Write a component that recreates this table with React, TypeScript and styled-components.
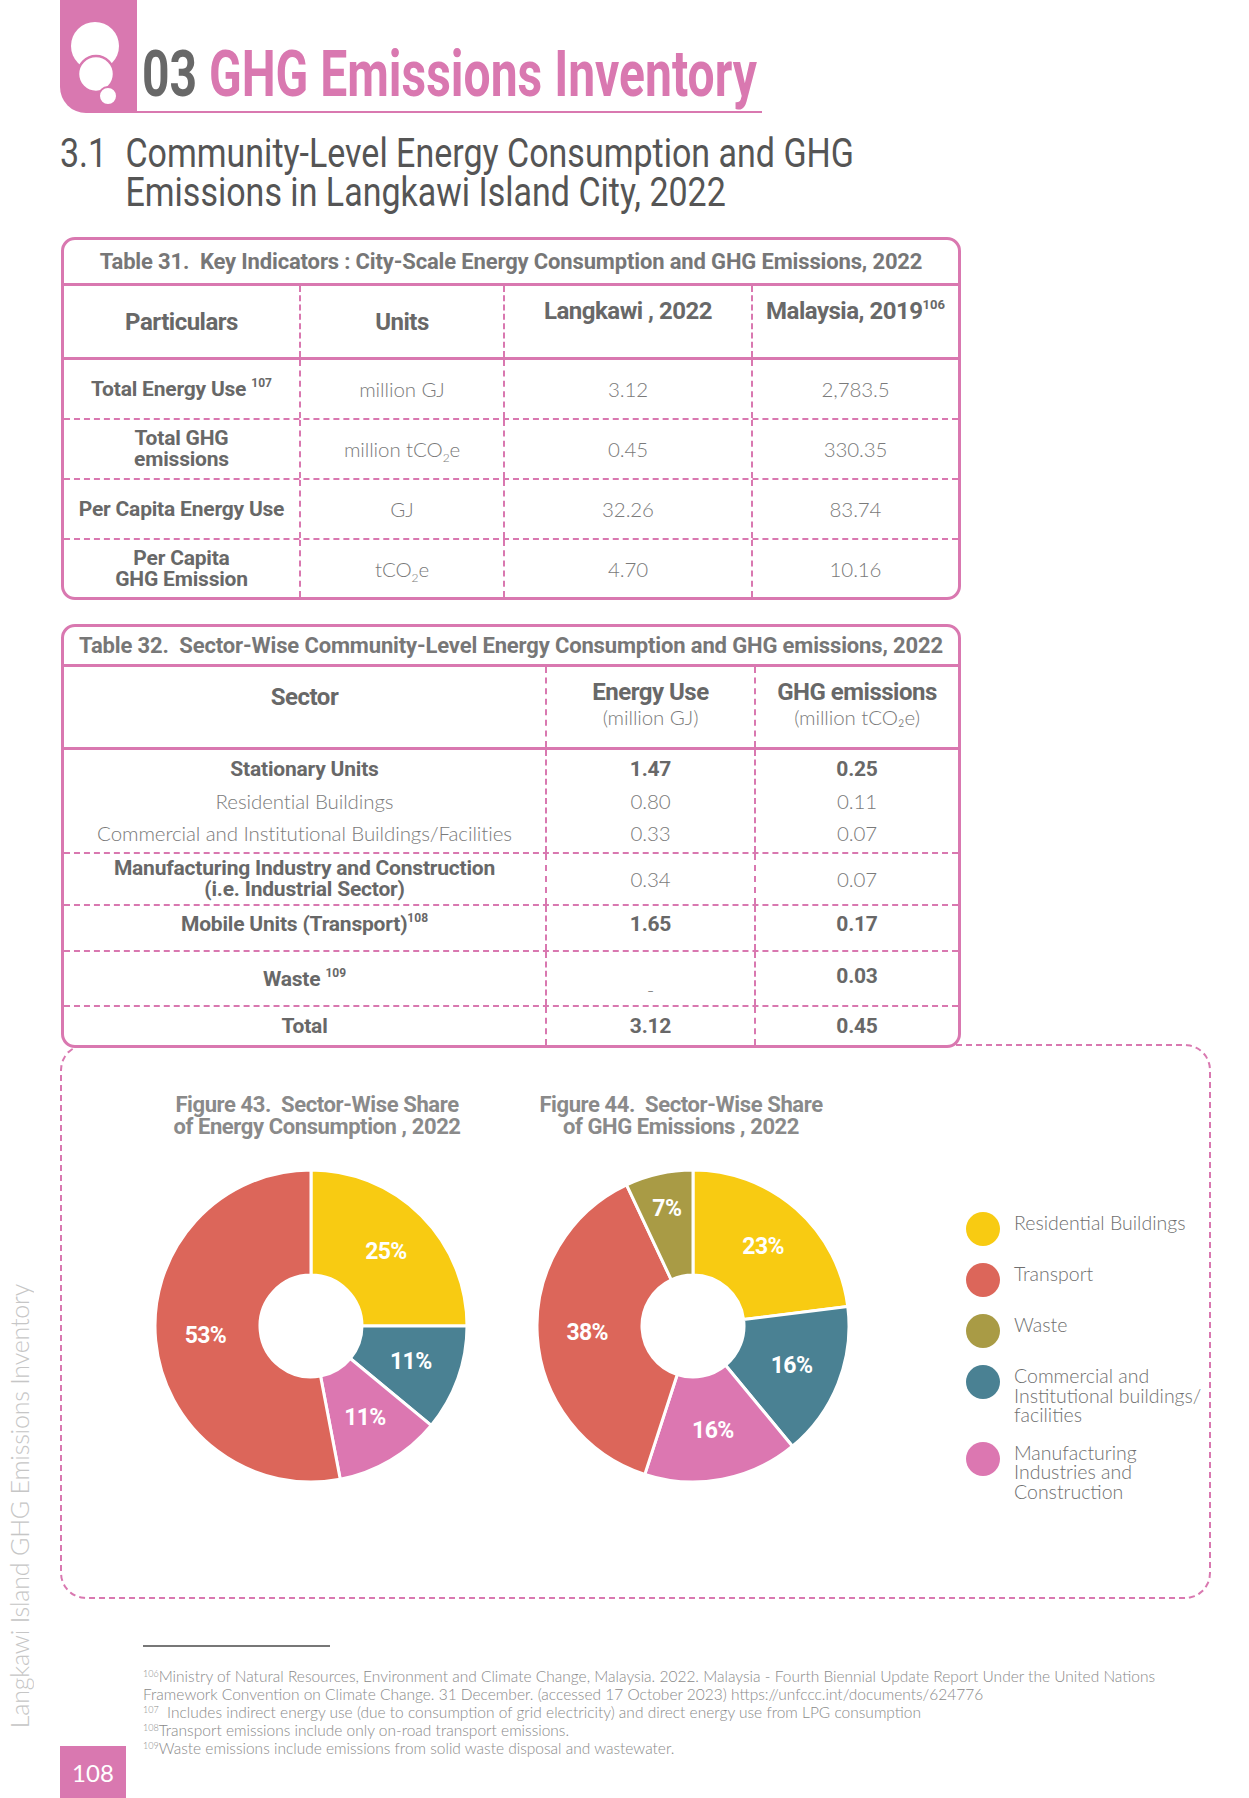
import styled, { createGlobalStyle } from "styled-components";

const PINK = "#d978b0";
const GRAY = "#686868";
const LIGHT = "#7a7a7a";

const BOLD = `Roboto, "Liberation Sans", sans-serif`;
const THIN = `Lato, "Liberation Sans", sans-serif`;

const GlobalStyle = createGlobalStyle`
  html, body {
    margin: 0;
    padding: 0;
    background: #ffffff;
  }
  body {
    font-family: ${THIN};
  }
`;

const Page = styled.div`
  width: 1249px;
  height: 1798px;
  display: flex;
  overflow: hidden;
  background: #fff;
`;

const Gutter = styled.div`
  width: 60px;
  flex: none;
  display: flex;
  flex-direction: column;
  justify-content: flex-end;
  padding-bottom: 70px;
  box-sizing: border-box;
`;

const SideLabel = styled.div`
  writing-mode: vertical-rl;
  transform: rotate(180deg);
  font-family: ${THIN};
  font-weight: 300;
  font-size: 25px;
  line-height: 30px;
  letter-spacing: -0.2px;
  color: #c6c6c6;
  margin-left: 4px;
  white-space: nowrap;
`;

const Main = styled.div`
  flex: 1;
  display: flex;
  flex-direction: column;
`;

/* ---------- chapter header ---------- */

const Header = styled.div`
  display: flex;
  height: 113px;
`;

const Tab = styled.div`
  width: 77px;
  height: 113px;
  background: ${PINK};
  border-radius: 0 0 0 26px;
  flex: none;
`;

const ChapterLine = styled.div`
  width: 625px;
  border-bottom: 2px solid ${PINK};
  display: flex;
  align-items: flex-end;
  padding: 0 0 10px 5px;
  box-sizing: border-box;
`;

const ChapterTitle = styled.h1`
  margin: 0;
  font-family: ${BOLD};
  font-weight: 700;
  font-size: 64px;
  line-height: 52px;
  color: ${GRAY};
  white-space: nowrap;
  transform: scaleX(0.75);
  transform-origin: left bottom;
  span {
    color: ${PINK};
  }
`;

const SectionTitle = styled.h2`
  margin: 21px 0 0 0;
  display: flex;
  font-family: ${BOLD};
  font-weight: 400;
  font-size: 40px;
  line-height: 39px;
  color: #555;
  white-space: nowrap;
  transform: scaleX(0.85);
  transform-origin: left top;
`;

const SectionNum = styled.span`
  width: 77px;
  flex: none;
`;

/* ---------- tables ---------- */

const Card = styled.div<{ $mt: number }>`
  position: relative;
  z-index: 1;
  width: 900px;
  margin-top: ${(p) => p.$mt}px;
  margin-left: 1px;
  border: 3px solid ${PINK};
  border-radius: 14px;
  background: #fff;
  box-sizing: border-box;
  overflow: hidden;
`;

const CardTitle = styled.div<{ $h: number }>`
  height: ${(p) => p.$h}px;
  display: flex;
  align-items: center;
  justify-content: center;
  border-bottom: 3px solid ${PINK};
  font-family: ${BOLD};
  font-weight: 700;
  font-size: 22px;
  letter-spacing: -0.15px;
  color: #777;
  white-space: nowrap;
`;

const Row = styled.div<{ $cols: string; $h: number; $line?: "solid" | "dashed" | "none" }>`
  display: grid;
  grid-template-columns: ${(p) => p.$cols};
  height: ${(p) => p.$h}px;
  box-sizing: content-box;
  border-bottom: ${(p) =>
    p.$line === "solid"
      ? `3px solid ${PINK}`
      : p.$line === "none"
      ? "none"
      : `2px dashed ${PINK}`};
`;

const Cell = styled.div<{ $v?: "center" | "start"; $pt?: number }>`
  display: flex;
  flex-direction: column;
  align-items: center;
  justify-content: ${(p) => (p.$v === "start" ? "flex-start" : "center")};
  padding-top: ${(p) => p.$pt ?? 0}px;
  text-align: center;
  box-sizing: border-box;
  & + & {
    border-left: 2px dashed ${PINK};
  }
`;

const HeadText = styled.div`
  font-family: ${BOLD};
  font-weight: 700;
  font-size: 24px;
  line-height: 26px;
  letter-spacing: -0.5px;
  color: ${GRAY};
  white-space: nowrap;
  sup {
    font-size: 13px;
    vertical-align: 10px;
    line-height: 0;
    letter-spacing: 0;
  }
`;

const BoldText = styled.div<{ $lh?: number }>`
  font-family: ${BOLD};
  font-weight: 700;
  font-size: 21px;
  line-height: ${(p) => p.$lh ?? 32}px;
  letter-spacing: -0.2px;
  color: ${GRAY};
  white-space: nowrap;
  sup {
    font-size: 12px;
    vertical-align: 9px;
    line-height: 0;
    letter-spacing: 0;
  }
`;

const LightText = styled.div<{ $lh?: number }>`
  font-family: ${THIN};
  font-weight: 300;
  font-size: 20.5px;
  line-height: ${(p) => p.$lh ?? 32}px;
  letter-spacing: -0.1px;
  color: ${LIGHT};
  white-space: nowrap;
  sub {
    font-size: 12px;
    vertical-align: -5px;
    line-height: 0;
  }
`;

/* ---------- charts ---------- */

const ChartBox = styled.div`
  margin-top: -4px;
  width: 1151px;
  height: 555px;
  border: 2px dashed ${PINK};
  border-radius: 26px;
  box-sizing: border-box;
  display: flex;
  padding: 48px 0 0 78px;
`;

const Figure = styled.div`
  width: 342px;
  display: flex;
  flex-direction: column;
  align-items: center;
  & + & {
    margin-left: 40px;
  }
`;

const FigTitle = styled.div<{ $dx: number }>`
  font-family: ${BOLD};
  font-weight: 700;
  font-size: 22px;
  line-height: 22px;
  letter-spacing: -0.4px;
  color: #8a8a8a;
  text-align: center;
  white-space: nowrap;
  margin: 0 0 28px ${(p) => p.$dx}px;
`;

const Legend = styled.div`
  margin: 118px 0 0 102px;
  display: flex;
  flex-direction: column;
  gap: 17px;
`;

const LegendItem = styled.div`
  display: flex;
  align-items: flex-start;
  gap: 14px;
`;

const Dot = styled.span<{ $c: string }>`
  width: 34px;
  height: 34px;
  border-radius: 50%;
  background: ${(p) => p.$c};
  flex: none;
`;

const LegendLabel = styled.div`
  font-family: ${THIN};
  font-weight: 300;
  font-size: 19.5px;
  line-height: 19.5px;
  color: #6f6f6f;
  padding-top: 1px;
`;

/* ---------- footer ---------- */

const Footer = styled.div`
  flex: 1;
  display: grid;
  grid-template-columns: 83px 1fr;
`;

const PageNum = styled.div`
  align-self: end;
  width: 66px;
  height: 52px;
  background: ${PINK};
  color: #fff;
  font-family: ${THIN};
  font-weight: 400;
  font-size: 24px;
  display: flex;
  align-items: center;
  justify-content: center;
`;

const Notes = styled.div`
  padding-top: 46px;
`;

const Rule = styled.div`
  width: 187px;
  height: 2px;
  background: #777;
  margin-bottom: 20px;
`;

const Note = styled.div`
  font-family: ${THIN};
  font-weight: 300;
  font-size: 15.5px;
  line-height: 18px;
  letter-spacing: 0;
  color: #8a8a8a;
  white-space: nowrap;
  sup {
    font-size: 9px;
    vertical-align: 5px;
    line-height: 0;
  }
`;

/* ---------- donut ---------- */

type Slice = { value: number; color: string; lr?: number };

const YELLOW = "#f8cb12";
const RED = "#dc665a";
const OLIVE = "#a99b45";
const TEAL = "#4a8193";
const MAGENTA = "#dc77b1";

function pt(c: number, r: number, deg: number) {
  const a = (deg * Math.PI) / 180;
  return [c + r * Math.sin(a), c - r * Math.cos(a)];
}

function Donut({ slices }: { slices: Slice[] }) {
  const c = 160;
  const r1 = 156;
  const r0 = 51;
  let acc = 0;
  return (
    <svg width={320} height={320} viewBox="0 0 320 320">
      {slices.map((s, i) => {
        const a0 = (acc / 100) * 360;
        acc += s.value;
        const a1 = (acc / 100) * 360;
        const large = a1 - a0 > 180 ? 1 : 0;
        const [x1, y1] = pt(c, r1, a0);
        const [x2, y2] = pt(c, r1, a1);
        const [x3, y3] = pt(c, r0, a1);
        const [x4, y4] = pt(c, r0, a0);
        const d = `M${x1} ${y1} A${r1} ${r1} 0 ${large} 1 ${x2} ${y2} L${x3} ${y3} A${r0} ${r0} 0 ${large} 0 ${x4} ${y4} Z`;
        const [lx, ly] = pt(c, s.lr ?? 106, (a0 + a1) / 2);
        return (
          <g key={i}>
            <path d={d} fill={s.color} stroke="#fff" strokeWidth={3} strokeLinejoin="round" />
            <text
              x={lx}
              y={ly}
              fill="#fff"
              fontFamily="Roboto, sans-serif"
              fontWeight={700}
              fontSize={23}
              letterSpacing={-0.6}
              textAnchor="middle"
              dominantBaseline="central"
            >
              {s.value}%
            </text>
          </g>
        );
      })}
    </svg>
  );
}

function Logo() {
  return (
    <svg width={77} height={113} viewBox="0 0 77 113">
      <circle cx={35} cy={46} r={24} fill="#fff" />
      <circle cx={36} cy={74} r={18} fill="#fff" stroke={PINK} strokeWidth={2.5} />
      <circle cx={48} cy={96} r={9} fill="#fff" stroke={PINK} strokeWidth={2} />
    </svg>
  );
}

const T31 = "235px 204px 248px 1fr";
const T32 = "481px 209px 1fr";

export default function App() {
  return (
    <Page>
      <GlobalStyle />
      <Gutter>
        <SideLabel>Langkawi Island GHG Emissions Inventory</SideLabel>
      </Gutter>
      <Main>
        <Header>
          <Tab>
            <Logo />
          </Tab>
          <ChapterLine>
            <ChapterTitle>
              03 <span>GHG Emissions Inventory</span>
            </ChapterTitle>
          </ChapterLine>
        </Header>

        <SectionTitle>
          <SectionNum>3.1</SectionNum>
          <div>
            Community-Level Energy Consumption and GHG
            <br />
            Emissions in Langkawi Island City, 2022
          </div>
        </SectionTitle>

        <Card $mt={25}>
          <CardTitle $h={43}>
            Table 31.&nbsp; Key Indicators : City-Scale Energy Consumption and GHG Emissions, 2022
          </CardTitle>
          <Row $cols={T31} $h={71} $line="solid">
            <Cell>
              <HeadText>Particulars</HeadText>
            </Cell>
            <Cell>
              <HeadText>Units</HeadText>
            </Cell>
            <Cell $v="start" $pt={12}>
              <HeadText>Langkawi , 2022</HeadText>
            </Cell>
            <Cell $v="start" $pt={12}>
              <HeadText>
                Malaysia, 2019<sup>106</sup>
              </HeadText>
            </Cell>
          </Row>
          <Row $cols={T31} $h={58}>
            <Cell>
              <BoldText>
                Total Energy Use <sup>107</sup>
              </BoldText>
            </Cell>
            <Cell>
              <LightText>million GJ</LightText>
            </Cell>
            <Cell>
              <LightText>3.12</LightText>
            </Cell>
            <Cell>
              <LightText>2,783.5</LightText>
            </Cell>
          </Row>
          <Row $cols={T31} $h={58}>
            <Cell>
              <BoldText $lh={21}>Total GHG</BoldText>
              <BoldText $lh={21}>emissions</BoldText>
            </Cell>
            <Cell>
              <LightText>
                million tCO<sub>2</sub>e
              </LightText>
            </Cell>
            <Cell>
              <LightText>0.45</LightText>
            </Cell>
            <Cell>
              <LightText>330.35</LightText>
            </Cell>
          </Row>
          <Row $cols={T31} $h={58}>
            <Cell>
              <BoldText>Per Capita Energy Use</BoldText>
            </Cell>
            <Cell>
              <LightText>GJ</LightText>
            </Cell>
            <Cell>
              <LightText>32.26</LightText>
            </Cell>
            <Cell>
              <LightText>83.74</LightText>
            </Cell>
          </Row>
          <Row $cols={T31} $h={57} $line="none">
            <Cell>
              <BoldText $lh={21}>Per Capita</BoldText>
              <BoldText $lh={21}>GHG Emission</BoldText>
            </Cell>
            <Cell>
              <LightText>
                tCO<sub>2</sub>e
              </LightText>
            </Cell>
            <Cell>
              <LightText>4.70</LightText>
            </Cell>
            <Cell>
              <LightText>10.16</LightText>
            </Cell>
          </Row>
        </Card>

        <Card $mt={24}>
          <CardTitle $h={37}>
            Table 32.&nbsp; Sector-Wise Community-Level Energy Consumption and GHG emissions, 2022
          </CardTitle>
          <Row $cols={T32} $h={80} $line="solid">
            <Cell $v="start" $pt={17}>
              <HeadText>Sector</HeadText>
            </Cell>
            <Cell $v="start" $pt={12}>
              <HeadText>Energy Use</HeadText>
              <LightText $lh={24}>(million GJ)</LightText>
            </Cell>
            <Cell $v="start" $pt={12}>
              <HeadText>GHG emissions</HeadText>
              <LightText $lh={24}>(million tCO₂e)</LightText>
            </Cell>
          </Row>
          <Row $cols={T32} $h={102}>
            <Cell>
              <BoldText>Stationary Units</BoldText>
              <LightText>Residential Buildings</LightText>
              <LightText>Commercial and Institutional Buildings/Facilities</LightText>
            </Cell>
            <Cell>
              <BoldText>1.47</BoldText>
              <LightText>0.80</LightText>
              <LightText>0.33</LightText>
            </Cell>
            <Cell>
              <BoldText>0.25</BoldText>
              <LightText>0.11</LightText>
              <LightText>0.07</LightText>
            </Cell>
          </Row>
          <Row $cols={T32} $h={50}>
            <Cell>
              <BoldText $lh={21}>Manufacturing Industry and Construction</BoldText>
              <BoldText $lh={21}>(i.e. Industrial Sector)</BoldText>
            </Cell>
            <Cell>
              <LightText>0.34</LightText>
            </Cell>
            <Cell>
              <LightText>0.07</LightText>
            </Cell>
          </Row>
          <Row $cols={T32} $h={44}>
            <Cell $v="start" $pt={2}>
              <BoldText>
                Mobile Units (Transport)<sup>108</sup>
              </BoldText>
            </Cell>
            <Cell $v="start" $pt={2}>
              <BoldText>1.65</BoldText>
            </Cell>
            <Cell $v="start" $pt={2}>
              <BoldText>0.17</BoldText>
            </Cell>
          </Row>
          <Row $cols={T32} $h={53}>
            <Cell>
              <BoldText>
                Waste <sup>109</sup>
              </BoldText>
            </Cell>
            <Cell $v="start" $pt={21}>
              <LightText>-</LightText>
            </Cell>
            <Cell $v="start" $pt={8}>
              <BoldText>0.03</BoldText>
            </Cell>
          </Row>
          <Row $cols={T32} $h={38} $line="none">
            <Cell>
              <BoldText>Total</BoldText>
            </Cell>
            <Cell>
              <BoldText>3.12</BoldText>
            </Cell>
            <Cell>
              <BoldText>0.45</BoldText>
            </Cell>
          </Row>
        </Card>

        <ChartBox>
          <Figure>
            <FigTitle $dx={12}>
              Figure 43.&nbsp; Sector-Wise Share
              <br />
              of Energy Consumption , 2022
            </FigTitle>
            <Donut
              slices={[
                { value: 25, color: YELLOW },
                { value: 11, color: TEAL },
                { value: 11, color: MAGENTA },
                { value: 53, color: RED },
              ]}
            />
          </Figure>
          <Figure>
            <FigTitle $dx={-24}>
              Figure 44.&nbsp; Sector-Wise Share
              <br />
              of GHG Emissions , 2022
            </FigTitle>
            <Donut
              slices={[
                { value: 23, color: YELLOW },
                { value: 16, color: TEAL },
                { value: 16, color: MAGENTA },
                { value: 38, color: RED },
                { value: 7, color: OLIVE, lr: 120 },
              ]}
            />
          </Figure>
          <Legend>
            <LegendItem>
              <Dot $c={YELLOW} />
              <LegendLabel>Residential Buildings</LegendLabel>
            </LegendItem>
            <LegendItem>
              <Dot $c={RED} />
              <LegendLabel>Transport</LegendLabel>
            </LegendItem>
            <LegendItem>
              <Dot $c={OLIVE} />
              <LegendLabel>Waste</LegendLabel>
            </LegendItem>
            <LegendItem>
              <Dot $c={TEAL} />
              <LegendLabel>
                Commercial and
                <br />
                Institutional buildings/
                <br />
                facilities
              </LegendLabel>
            </LegendItem>
            <LegendItem>
              <Dot $c={MAGENTA} />
              <LegendLabel>
                Manufacturing
                <br />
                Industries and
                <br />
                Construction
              </LegendLabel>
            </LegendItem>
          </Legend>
        </ChartBox>

        <Footer>
          <PageNum>108</PageNum>
          <Notes>
            <Rule />
            <Note>
              <sup>106</sup>Ministry of Natural Resources, Environment and Climate Change, Malaysia. 2022. Malaysia - Fourth Biennial Update Report Under the United Nations
            </Note>
            <Note>
              Framework Convention on Climate Change. 31 December. (accessed 17 October 2023) https://unfccc.int/documents/624776
            </Note>
            <Note>
              <sup>107</sup>&nbsp; Includes indirect energy use (due to consumption of grid electricity) and direct energy use from LPG consumption
            </Note>
            <Note>
              <sup>108</sup>Transport emissions include only on-road transport emissions.
            </Note>
            <Note>
              <sup>109</sup>Waste emissions include emissions from solid waste disposal and wastewater.
            </Note>
          </Notes>
        </Footer>
      </Main>
    </Page>
  );
}
